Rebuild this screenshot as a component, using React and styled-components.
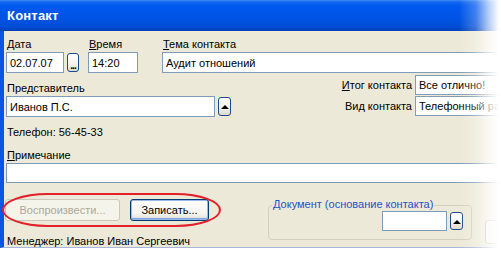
import React from "react"
import styled, { createGlobalStyle } from "styled-components"

const GlobalStyle = createGlobalStyle`
  html, body {
    margin: 0;
    padding: 0;
    background: #fff;
  }
  body {
    font-family: "Liberation Sans", Arial, sans-serif;
    font-size: 11px;
    color: #000;
  }
  * { box-sizing: border-box; }
`

const Window = styled.div`
  position: relative;
  width: 501px;
  height: 254px;
  overflow: hidden;
  background: #fff;
`

const TitleBar = styled.div`
  height: 31px;
  width: 560px;
  display: flex;
  align-items: center;
  padding-left: 7px;
  padding-bottom: 1px;
  background: linear-gradient(
    to bottom,
    #3d8cf7 0px,
    #1466ee 2px,
    #0058ee 6px,
    #0055e8 50%,
    #004ed8 85%,
    #0040b8 100%
  );
`

const Title = styled.span`
  color: #fff;
  font-weight: bold;
  font-size: 13px;
  letter-spacing: 0.2px;
`

const Body = styled.div`
  width: 560px;
  height: 217px;
  background: #ece9d8;
  border-left: 4px solid #0b55e3;
  border-bottom: 1px solid #a7b7da;
  padding: 7px 0 0 2px;
`

const Row = styled.div`
  display: flex;
  align-items: flex-start;
  margin-top: ${p => p.$mt || 0}px;
`

const Field = styled.div`
  display: flex;
  flex-direction: column;
  gap: 1px;
  margin-left: ${p => p.$ml || 0}px;
  padding-top: ${p => p.$pt || 0}px;
`

const Label = styled.div`
  line-height: 13px;
  padding-left: 1px;
  white-space: nowrap;
`

const Key = styled.span`
  text-decoration: underline;
`

const TextBox = styled.div`
  width: ${p => p.$w}px;
  height: ${p => p.$h || 21}px;
  border: 1px solid #7f9db9;
  background: #fff;
  padding: 0 3px;
  display: flex;
  align-items: center;
  white-space: nowrap;
  overflow: hidden;
`

const Inline = styled.div`
  display: flex;
  align-items: center;
  gap: 3px;
`

const SmallButton = styled.div`
  width: ${p => p.$w || 13}px;
  height: ${p => p.$h || 19}px;
  border: 1px solid #1c4b8c;
  border-radius: 3px;
  background: linear-gradient(to bottom, #ffffff 0%, #f3f2ec 60%, #dcdad0 100%);
  display: flex;
  align-items: center;
  justify-content: center;
`

const Dots = styled.span`
  font-weight: bold;
  font-size: 10px;
  line-height: 10px;
  margin-top: 6px;
  letter-spacing: -1px;
`

const Arrow = styled.span`
  width: 0;
  height: 0;
  border-left: 4px solid transparent;
  border-right: 4px solid transparent;
  border-bottom: 4px solid #000;
  margin-top: 1px;
`

const RightCol = styled.div`
  display: flex;
  flex-direction: column;
  gap: 1px;
  margin-left: 69px;
  padding-top: 1px;
`

const RightLabel = styled.div`
  width: 112px;
  text-align: right;
  white-space: nowrap;
`

const Text = styled.div`
  line-height: 13px;
  padding-left: 1px;
  margin-top: ${p => p.$mt || 0}px;
  white-space: nowrap;
`

const ActionsCol = styled.div`
  width: 262px;
  padding-top: 16px;
`

const ButtonsRow = styled.div`
  position: relative;
  display: flex;
  gap: 10px;
  width: 204px;
  margin-left: -1px;
`

const XPButton = styled.div`
  width: ${p => p.$w}px;
  height: 22px;
  border-radius: 3px;
  display: flex;
  align-items: center;
  justify-content: center;
  white-space: nowrap;
  border: 1px solid ${p => (p.$disabled ? "#cac8bb" : "#003c74")};
  color: ${p => (p.$disabled ? "#aca899" : "#000")};
  background: ${p =>
    p.$disabled
      ? "#f5f4ea"
      : "linear-gradient(to bottom, #ffffff 0%, #f4f3ee 70%, #dedcd2 100%)"};
  box-shadow: ${p =>
    p.$default ? "inset 0 0 0 1px #98b8ea, inset 0 -1px 0 1px #7ea2e0" : "none"};
`

const Highlight = styled.div`
  position: absolute;
  left: -3px;
  right: -12px;
  top: -6px;
  bottom: -6px;
  border: 2px solid #e2212a;
  border-radius: 48px / 18px;
  pointer-events: none;
`

const GroupBox = styled.div`
  position: relative;
  width: 204px;
  height: 35px;
  margin-top: 22px;
  border: 1px solid #d3d0bf;
  border-radius: 4px;
  display: flex;
  justify-content: flex-end;
  align-items: flex-start;
  padding: 5px 8px 0 0;
`

const GroupLabel = styled.div`
  position: absolute;
  top: -8px;
  left: 3px;
  padding: 0 1px;
  line-height: 13px;
  color: #2352c8;
  background: #ece9d8;
  white-space: nowrap;
`

const FaintButton = styled.div`
  width: 40px;
  height: 24px;
  margin-left: 13px;
  margin-top: 37px;
  border: 1px solid #b8b6aa;
  border-radius: 3px;
  background: #f4f3ee;
`

const Fade = styled.div`
  position: absolute;
  top: 0;
  right: 0;
  width: 42px;
  height: 100%;
  background: linear-gradient(
    to right,
    rgba(255, 255, 255, 0) 0%,
    rgba(255, 255, 255, 0.25) 40%,
    rgba(255, 255, 255, 0.7) 70%,
    #fff 95%
  );
  pointer-events: none;
`

export default function App() {
  return (
    <Window>
      <GlobalStyle />
      <TitleBar>
        <Title>Контакт</Title>
      </TitleBar>
      <Body>
        <Row>
          <Field>
            <Label><Key>Д</Key>ата</Label>
            <Inline>
              <TextBox $w={58}>02.07.07</TextBox>
              <SmallButton $w={12}><Dots>...</Dots></SmallButton>
            </Inline>
          </Field>
          <Field $ml={9}>
            <Label><Key>В</Key>ремя</Label>
            <TextBox $w={50}>14:20</TextBox>
          </Field>
          <Field $ml={24}>
            <Label><Key>Т</Key>ема контакта</Label>
            <TextBox $w={380}>Аудит отношений</TextBox>
          </Field>
        </Row>

        <Row $mt={1}>
          <Field $pt={8}>
            <Label>Представитель</Label>
            <Inline>
              <TextBox $w={209}>Иванов П.С.</TextBox>
              <SmallButton><Arrow /></SmallButton>
            </Inline>
          </Field>
          <RightCol>
            <Inline>
              <RightLabel><Key>И</Key>тог контакта</RightLabel>
              <TextBox $w={100} $h={20}>Все отлично!</TextBox>
            </Inline>
            <Inline>
              <RightLabel>Вид контакта</RightLabel>
              <TextBox $w={100} $h={20}>Телефонный разговор</TextBox>
            </Inline>
          </RightCol>
        </Row>

        <Text $mt={9}>Телефон: 56-45-33</Text>

        <Field $pt={10}>
          <Label><Key>П</Key>римечание</Label>
          <TextBox $w={540} $h={20} />
        </Field>

        <Row>
          <ActionsCol>
            <ButtonsRow>
              <XPButton $w={115} $disabled>Воспроизвести...</XPButton>
              <XPButton $w={79} $default>Записать...</XPButton>
              <Highlight />
            </ButtonsRow>
            <Text $mt={14}>Менеджер: Иванов Иван Сергеевич</Text>
          </ActionsCol>
          <GroupBox>
            <GroupLabel>Документ (основание контакта)</GroupLabel>
            <Inline>
              <TextBox $w={65} $h={20} />
              <SmallButton $h={18}><Arrow /></SmallButton>
            </Inline>
          </GroupBox>
          <FaintButton />
        </Row>
      </Body>
      <Fade />
    </Window>
  )
}
